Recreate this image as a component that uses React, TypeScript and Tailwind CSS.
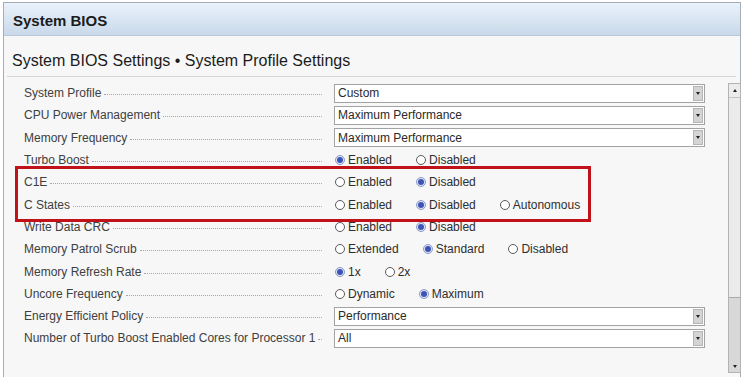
import React from "react";

type Row =
  | { label: string; kind: "select"; value: string }
  | { label: string; kind: "radio"; options: string[]; checked: number };

const rows: Row[] = [
  { label: "System Profile", kind: "select", value: "Custom" },
  { label: "CPU Power Management", kind: "select", value: "Maximum Performance" },
  { label: "Memory Frequency", kind: "select", value: "Maximum Performance" },
  { label: "Turbo Boost", kind: "radio", options: ["Enabled", "Disabled"], checked: 0 },
  { label: "C1E", kind: "radio", options: ["Enabled", "Disabled"], checked: 1 },
  { label: "C States", kind: "radio", options: ["Enabled", "Disabled", "Autonomous"], checked: 1 },
  { label: "Write Data CRC", kind: "radio", options: ["Enabled", "Disabled"], checked: 1 },
  { label: "Memory Patrol Scrub", kind: "radio", options: ["Extended", "Standard", "Disabled"], checked: 1 },
  { label: "Memory Refresh Rate", kind: "radio", options: ["1x", "2x"], checked: 0 },
  { label: "Uncore Frequency", kind: "radio", options: ["Dynamic", "Maximum"], checked: 1 },
  { label: "Energy Efficient Policy", kind: "select", value: "Performance" },
  { label: "Number of Turbo Boost Enabled Cores for Processor 1", kind: "select", value: "All" },
];

function Radio({ on }: { on: boolean }) {
  if (on) {
    return (
      <span className="w-[10px] h-[10px] rounded-full border border-[#8d9bc9] bg-[#dde3f4] flex items-center justify-center shrink-0">
        <span className="w-[6px] h-[6px] rounded-full bg-[#3d54b6]" />
      </span>
    );
  }
  return <span className="w-[10px] h-[10px] rounded-full border border-[#5a5a5a] bg-white shrink-0" />;
}

function Select({ value }: { value: string }) {
  return (
    <div className="w-[371px] h-[19px] border border-[#a3a3a3] bg-white flex items-center">
      <span className="flex-1 pl-[3px] text-[12px] text-[#2a2a2a] leading-none">{value}</span>
      <span className="w-[10px] h-[15px] mr-[1px] bg-[#d4d4d4] border border-[#b5b5b5] flex items-center justify-center">
        <span className="w-0 h-0 border-l-[2px] border-r-[2px] border-t-[3px] border-l-transparent border-r-transparent border-t-[#222]" />
      </span>
    </div>
  );
}

export default function App() {
  return (
    <div
      className="relative w-[743px] h-[377px] bg-white overflow-hidden"
      style={{ fontFamily: '"Liberation Sans", Arial, sans-serif' }}
    >
      <div className="ml-[3px] mt-[2px] w-[738px] h-[385px] border border-[#a4adb8] flex flex-col bg-[#f7f7f7]">
        <div className="h-[33px] shrink-0 flex items-center px-[9px] pt-[5px] bg-gradient-to-b from-[#eaf2fb] to-[#c9d9ea] border-b border-[#b9c7d6]">
          <span className="text-[15px] font-bold text-[#1b1b1b]">System BIOS</span>
        </div>
        <div className="h-[41px] shrink-0 flex items-center px-[8px] pt-[9px] mr-[4px] ml-[3px] border-b border-[#d6d6d6]">
          <span className="text-[16px] text-[#1b1b1b] -ml-[3px]">System BIOS Settings • System Profile Settings</span>
        </div>
        <div className="flex flex-1">
          <div className="flex-1 flex flex-col pt-[5px] pl-[20px]">
            {rows.map((r) => (
              <div key={r.label} className="h-[22.3px] flex items-center">
                <div className="w-[310px] pr-[12px] flex items-center text-[12px] text-[#404040]">
                  <span className="whitespace-nowrap">{r.label}</span>
                  <span className="flex-1 ml-[3px] mt-[3px] border-b border-dotted border-[#a8a8a8]" />
                </div>
                {r.kind === "select" ? (
                  <Select value={r.value} />
                ) : (
                  <div className="flex items-center gap-[24px] pl-[1px]">
                    {r.options.map((o, i) => (
                      <span key={o} className="flex items-center gap-[3px]">
                        <Radio on={i === r.checked} />
                        <span className="text-[12px] text-[#2e2e2e]">{o}</span>
                      </span>
                    ))}
                  </div>
                )}
              </div>
            ))}
          </div>
          <div className="w-[13px] mt-[6px] h-[290px] mr-[-1px] border border-[#b3b3b3] bg-[#d8d8d8] flex flex-col">
            <div className="h-[14px] bg-[#ececec] flex items-center justify-center border-b border-[#c4c4c4]">
              <span className="w-0 h-0 border-l-[2px] border-r-[2px] border-b-[3px] border-l-transparent border-r-transparent border-b-[#222]" />
            </div>
            <div className="h-[200px] bg-[#ebebeb] border-b border-[#a9a9a9]" />
            <div className="flex-1" />
            <div className="h-[12px] flex items-center justify-center">
              <span className="w-0 h-0 border-l-[2px] border-r-[2px] border-t-[3px] border-l-transparent border-r-transparent border-t-[#222]" />
            </div>
          </div>
        </div>
      </div>
      <div className="absolute left-[15px] top-[166px] w-[576px] h-[56px] border-[3px] border-[#c1121a]" />
    </div>
  );
}
